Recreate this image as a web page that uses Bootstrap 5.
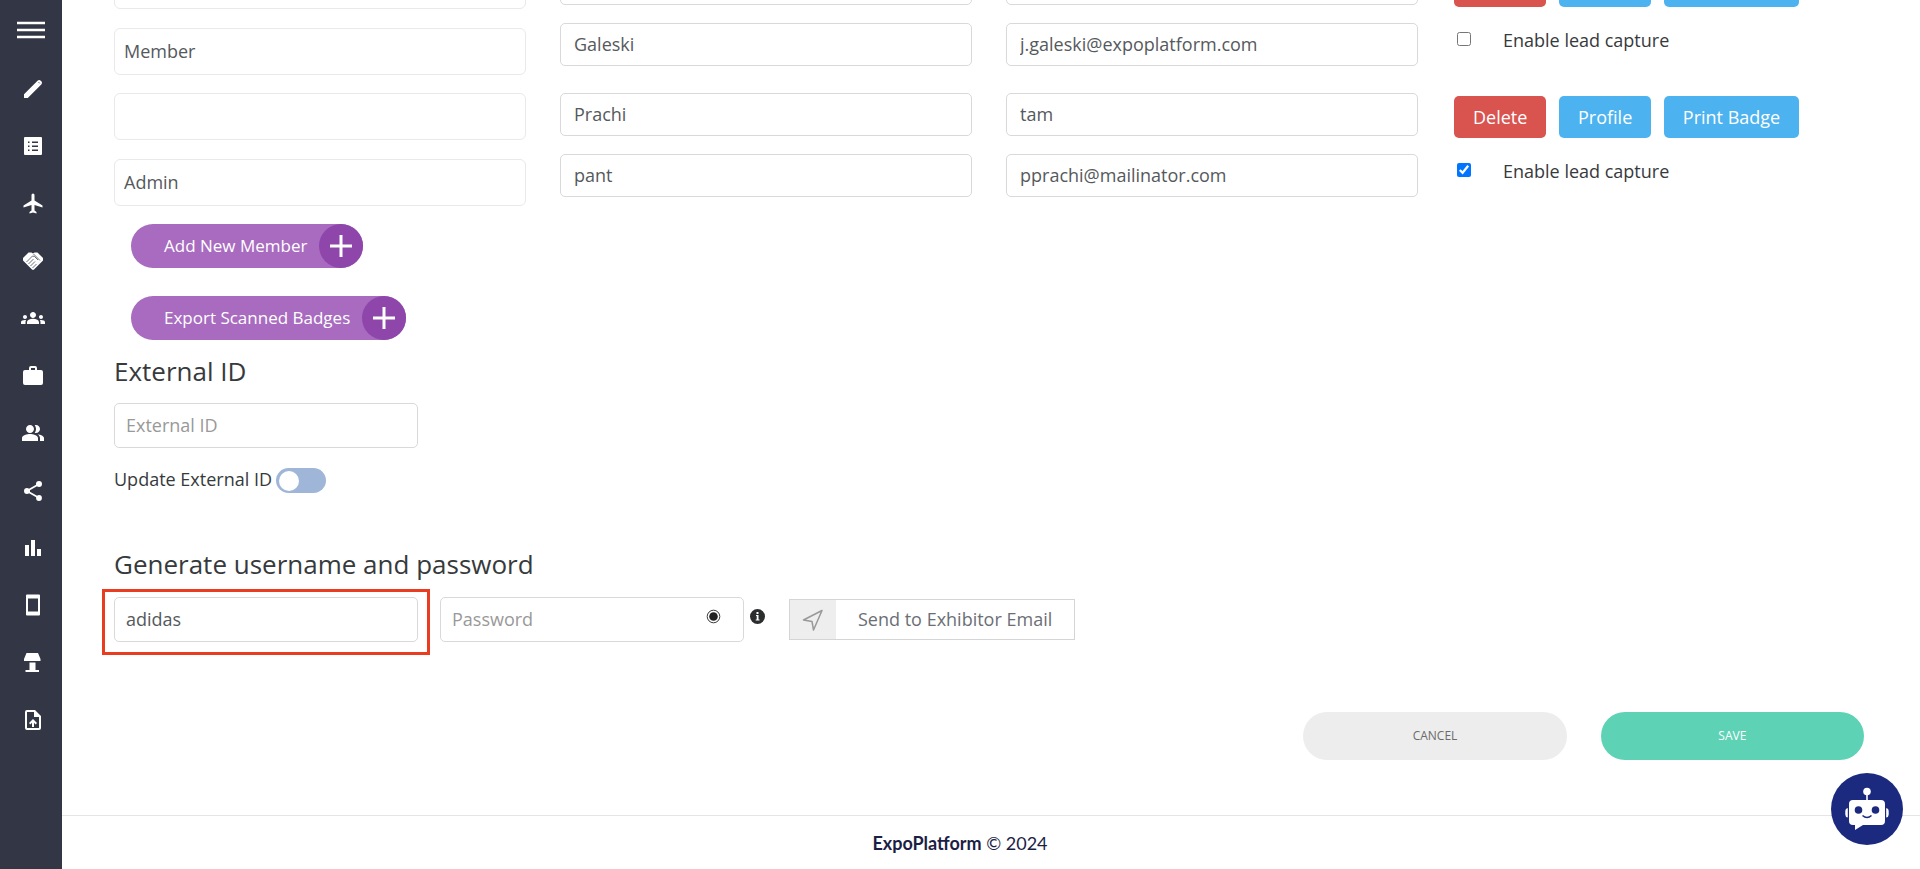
<!DOCTYPE html>
<html lang="en">
<head>
<meta charset="utf-8">
<meta name="viewport" content="width=device-width, initial-scale=1">
<title>ExpoPlatform</title>
<link href="https://cdn.jsdelivr.net/npm/bootstrap@5.3.0/dist/css/bootstrap.min.css" rel="stylesheet">
<style>
body{font-family:"Open Sans",sans-serif;font-size:18px;line-height:24px;color:#373a3c;background:#fff;overflow-x:hidden}
.page{min-height:100vh}
.side{width:62px;background:#333645;color:#fff;z-index:2}
.side .burger{height:60px;color:#fff}
.side .burger svg{width:28px;height:18px}
.icon-list{display:grid;grid-template-rows:repeat(12,1fr);height:689px}
.icon-list a{display:flex;align-items:center;justify-content:center;color:#fff;padding-left:4px}
.icon-list svg{width:24px;height:24px;fill:currentColor}
.content-area{padding:0 56px 0 52px;margin-top:-38px}
.row-wide{--bs-gutter-x:34px}
.member{height:131px}
.form-control,.form-select{font-size:18px;line-height:24px;color:#55595c;border-radius:5px}
.form-control{border-color:#d9d9d9;height:43px;padding:5px 13px 7px}
.form-select{border-color:#e9e9e9;height:47px;padding:7px 9px 9px;background-image:none;border-radius:6px}
.form-control::placeholder{color:#999;opacity:1}
.field{width:304px;height:45px;padding:5px 11px 7px}
.stack-select{display:grid;gap:19px}
.stack-input{display:grid;gap:18px}
.actions{padding-left:19px}
.buttons{gap:13px;padding-top:3px}
.act{font-size:18px;line-height:24px;padding:8px 19px;height:42px;border:0;border-radius:5px;color:#fff}
.act-red{background:#d9534f}
.act-blue{background:#4db3f0}
.act-short{width:92px}
.act-long{width:135px}
.lead-check{gap:32px;margin-top:21px;padding-left:3px}
.lead-check input{width:14px;height:14px;margin:0 0 3px}
.pill{height:44px;border:0;border-radius:22px;background:#a86bc0;color:#fff;font-size:17px;font-weight:500;padding:0 0 0 33px;gap:12px;margin-left:17px}
.pill-plus{width:44px;height:44px;border-radius:50%;background:#8e46aa}
.export{margin-top:28px}
.title{font-size:26px;line-height:36px;font-weight:400;margin:0}
.ext-title{margin-top:13px;margin-bottom:14px}
.update{margin-top:19px;margin-bottom:53px}
.update label{padding-bottom:2px}
.switch{appearance:none;width:50px;height:25px;border-radius:13px;background:#9fb6d8;margin:0;cursor:pointer}
.switch::before{content:"";display:block;width:20px;height:20px;border-radius:50%;background:#fff;margin:3px}
.switch:checked::before{margin-left:27px}
.creds{margin-top:7px}
.marked{border:3px solid #ea3c20;padding:5px 9px 10px 9px;margin:0 10px 0 -12px}
.pass{margin-top:8px}
.eye{right:23px;top:12px;width:15px;height:15px}
.info{margin:20px 24px 0 6px}
.send{border:1px solid #d5d5d5;background:#fff;height:41px;color:#6b6f75;padding:0;margin-top:10px}
.send-icon{width:46px;background:#eee}
.send-text{padding:7px 22px}
.final{margin-top:57px}
.round-btn{height:48px;border:0;border-radius:24px;font-size:12px;line-height:16px}
.cancel{background:#ededed;color:#6b6b6b}
.save{background:#5ed2b5;color:#fff}
.foot{height:54px;border-top:1px solid #e5e5e5;font-family:Lato,sans-serif;font-size:18px;color:#1c1e45;padding-right:62px}
.bot{right:17px;bottom:24px;width:72px;height:72px;background:#1b2a7e;border:0;z-index:5}
</style>
</head>
<body>
<div class="page d-flex">
<nav class="side flex-shrink-0" aria-label="Main">
  <button class="burger btn p-0 border-0 rounded-0 w-100 d-flex align-items-center justify-content-center" aria-label="Menu"><svg viewBox="0 0 28 18" stroke="#fff" stroke-width="2.600"><path d="M0 2h28M0 9h28M0 16h28"/></svg></button>
  <div class="icon-list">
    <a href="#" aria-label="Edit"><svg viewBox="0 0 24 24"><path d="M20.300 7.450c.9-.9.9-2.300 0-3.200l-.550-.550c-.9-.9-2.300-.9-3.200 0L3 17.250V21h3.750L20.300 7.450z"/><path d="M17.700 5.300l1 1" stroke="#333645" stroke-width="1"/></svg></a>
    <a href="#" aria-label="Lists"><svg viewBox="0 0 24 24"><path fill-rule="evenodd" d="M4 3h16a1 1 0 0 1 1 1v16a1 1 0 0 1-1 1H4a1 1 0 0 1-1-1V4a1 1 0 0 1 1-1zM7 7.500V9h1.500V7.500zM11 7.500V9h6V7.500zM7 11.500V13h1.500v-1.500zM11 11.500V13h6v-1.500zM7 15.500V17h1.500v-1.500zM11 15.500V17h6v-1.500z"/></svg></a>
    <a href="#" aria-label="Travel"><svg viewBox="0 0 24 24"><path d="M21 16v-2l-8-5V3.500a1.500 1.500 0 0 0-3 0V9l-8 5v2l8-2.500V19l-2 1.500V22l3.500-1 3.500 1v-1.500L13 19v-5.500l8 2.500z" transform="translate(.5 -.5)"/></svg></a>
    <a href="#" aria-label="Meetings"><svg viewBox="0 0 24 24"><path d="M7.500 3.500h3L12 4.500l1.500-1h3L22 9v2.500L13 20.500q-1 .9-2 0L2 11.500V9z"/><path d="M5.500 13l6-6 2 .5 3.500 3.500M7.500 15l5-5M9.500 17l4.500-4.500M11.500 19l4-4M12.500 5l6.500 6.500" fill="none" stroke="#333645" stroke-width=".7"/></svg></a>
    <a href="#" aria-label="Groups"><svg viewBox="0 0 24 24"><path d="M12 12.750c1.630 0 3.070.390 4.240.900 1.080.480 1.760 1.560 1.760 2.730V18H6v-1.610c0-1.180.680-2.260 1.760-2.730 1.170-.520 2.610-.910 4.240-.910zM4 13c1.100 0 2-.9 2-2s-.9-2-2-2-2 .9-2 2 .9 2 2 2zm1.130 1.100c-.370-.060-.740-.100-1.130-.100-.990 0-1.930.210-2.780.580C.480 14.900 0 15.620 0 16.430V18h4.500v-1.610c0-.830.230-1.610.630-2.290zM20 13c1.100 0 2-.9 2-2s-.9-2-2-2-2 .9-2 2 .9 2 2 2zm4 3.430c0-.810-.480-1.530-1.220-1.850-.850-.370-1.790-.580-2.780-.580-.390 0-.760.040-1.130.100.400.680.630 1.460.630 2.290V18H24v-1.570zM12 6c1.660 0 3 1.340 3 3s-1.340 3-3 3-3-1.340-3-3 1.340-3 3-3z"/></svg></a>
    <a href="#" aria-label="Business"><svg viewBox="0 0 24 24"><path d="M10 2h4a2 2 0 0 1 2 2v2h4a2 2 0 0 1 2 2v11a2 2 0 0 1-2 2H4a2 2 0 0 1-2-2V8a2 2 0 0 1 2-2h4V4a2 2 0 0 1 2-2m4 4V4h-4v2h4z"/></svg></a>
    <a href="#" aria-label="People"><svg viewBox="0 0 24 24"><path d="M16.670 13.130C18.040 14.060 19 15.320 19 17v3h4v-3c0-2.180-3.570-3.470-6.330-3.870zM15 12c2.210 0 4-1.790 4-4s-1.790-4-4-4c-.470 0-.910.100-1.330.240C14.500 5.270 15 6.580 15 8s-.5 2.730-1.330 3.760c.420.140.860.240 1.330.240zM9 12c2.210 0 4-1.790 4-4s-1.790-4-4-4-4 1.790-4 4 1.790 4 4 4zm0 1c-2.670 0-8 1.340-8 4v3h16v-3c0-2.660-5.330-4-8-4z"/></svg></a>
    <a href="#" aria-label="Share"><svg viewBox="0 0 24 24"><path d="M18 16.080c-.760 0-1.440.300-1.960.770L8.910 12.700c.050-.230.090-.460.090-.700s-.040-.470-.090-.700l7.050-4.110c.540.500 1.250.810 2.040.810a3 3 0 1 0-3-3c0 .240.040.470.090.700L8.040 9.810C7.500 9.310 6.790 9 6 9a3 3 0 1 0 0 6c.790 0 1.500-.310 2.040-.810l7.120 4.160c-.050.210-.080.430-.080.650a2.920 2.920 0 1 0 2.920-2.920z"/></svg></a>
    <a href="#" aria-label="Statistics"><svg viewBox="0 0 24 24"><path d="M4 9h4v11H4zM10 4h4v16h-4zM16 13h4v7h-4z"/></svg></a>
    <a href="#" aria-label="Mobile app"><svg viewBox="0 0 24 24"><path fill-rule="evenodd" d="M6 1.500h12a1 1 0 0 1 1 1v19a1 1 0 0 1-1 1H6a1 1 0 0 1-1-1v-19a1 1 0 0 1 1-1zM7 5.500v13h10v-13z"/></svg></a>
    <a href="#" aria-label="Stands"><svg viewBox="0 0 24 24"><path d="M5.500 2h11.500L19.500 8v2H3V8zM8.500 11.500h6V19H18v2H4.500v-2h4z"/></svg></a>
    <a href="#" aria-label="Upload"><svg viewBox="0 0 24 24"><path d="M14 2H6a2 2 0 0 0-2 2v16a2 2 0 0 0 2 2h12a2 2 0 0 0 2-2V8l-6-6m4 18H6V4h7v5h5v11M8 15l1.400 1.400L11 14.800V19h2v-4.200l1.600 1.600L16 15l-4-4-4 4z"/></svg></a>
  </div>
</nav>
<div class="flex-grow-1 d-flex flex-column">
<main class="content-area flex-grow-1">
  <div class="row row-wide member">
    <div class="col-3 stack-select align-content-start">
      <select class="form-select" aria-label="Title"><option></option></select>
      <select class="form-select" aria-label="Role"><option>Member</option></select>
    </div>
    <div class="col-3 stack-input align-content-start">
      <input class="form-control" aria-label="First name">
      <input class="form-control" aria-label="Last name" value="Galeski">
    </div>
    <div class="col-3 stack-input align-content-start">
      <input class="form-control" aria-label="Position">
      <input class="form-control" aria-label="Email" value="j.galeski@expoplatform.com">
    </div>
    <div class="col-3 actions">
      <div class="d-flex buttons"><button class="act act-red act-short" aria-label="Delete"></button><button class="act act-blue act-short" aria-label="Profile"></button><button class="act act-blue act-long" aria-label="Print Badge"></button></div>
      <div class="lead-check d-flex align-items-center"><input type="checkbox" id="lead1"><label for="lead1">Enable lead capture</label></div>
    </div>
  </div>
  <div class="row row-wide member">
    <div class="col-3 stack-select align-content-start">
      <select class="form-select" aria-label="Title"><option></option></select>
      <select class="form-select" aria-label="Role"><option>Admin</option></select>
    </div>
    <div class="col-3 stack-input align-content-start">
      <input class="form-control" aria-label="First name" value="Prachi">
      <input class="form-control" aria-label="Last name" value="pant">
    </div>
    <div class="col-3 stack-input align-content-start">
      <input class="form-control" aria-label="Position" value="tam">
      <input class="form-control" aria-label="Email" value="pprachi@mailinator.com">
    </div>
    <div class="col-3 actions">
      <div class="d-flex buttons"><button class="act act-red act-short">Delete</button><button class="act act-blue act-short">Profile</button><button class="act act-blue act-long text-nowrap px-0">Print Badge</button></div>
      <div class="lead-check d-flex align-items-center"><input type="checkbox" id="lead2" checked><label for="lead2">Enable lead capture</label></div>
    </div>
  </div>
  <button class="pill d-flex align-items-center">Add New Member<span class="pill-plus d-flex align-items-center justify-content-center"><svg width="22" height="22" viewBox="0 0 22 22" stroke="#fff" stroke-width="3"><path d="M11 0v22M0 11h22"/></svg></span></button>
  <button class="pill d-flex align-items-center export">Export Scanned Badges<span class="pill-plus d-flex align-items-center justify-content-center"><svg width="22" height="22" viewBox="0 0 22 22" stroke="#fff" stroke-width="3"><path d="M11 0v22M0 11h22"/></svg></span></button>

  <h2 class="title ext-title"><label for="ext">External ID</label></h2>
  <input class="form-control field" id="ext" placeholder="External ID">
  <div class="d-flex align-items-center gap-1 update"><label for="upd">Update External ID</label><input type="checkbox" role="switch" class="switch" id="upd"></div>

  <h2 class="title">Generate username and password</h2>
  <div class="d-flex align-items-start creds">
    <div class="marked"><input class="form-control field" aria-label="Username" value="adidas"></div>
    <div class="position-relative pass">
      <input class="form-control field" type="password" aria-label="Password" placeholder="Password">
      <button class="eye btn p-0 border-0 position-absolute d-flex" aria-label="Show password"><svg width="15" height="15" viewBox="0 0 15 15"><circle cx="7.500" cy="7.500" r="6.300" fill="none" stroke="#373a3c"/><circle cx="7.500" cy="7.500" r="4.300" fill="#222"/></svg></button>
    </div>
    <svg class="info" width="15" height="15" viewBox="0 0 15 15" role="img" aria-label="Info"><circle cx="7.500" cy="7.500" r="7.500" fill="#2b2d2f"/><path d="M6 6h2.500v4.500h1v1H5.700v-1h1V7H6zM6.500 3h2v2h-2z" fill="#fff"/></svg>
    <button class="send d-flex align-items-stretch"><span class="send-icon d-flex align-items-center justify-content-center"><svg width="22" height="22" viewBox="0 0 22 22" fill="none" stroke="#999" stroke-width="1.500" stroke-linejoin="round"><path d="M20 1.500L1.500 11l8.500 1.500 1.500 8.500z"/></svg></span><span class="send-text">Send to Exhibitor Email</span></button>
  </div>
  <div class="row row-wide justify-content-end final">
    <div class="col-2"><button class="round-btn w-100 cancel">CANCEL</button></div>
    <div class="col-2"><button class="round-btn w-100 save">SAVE</button></div>
  </div>
</main>
<footer class="foot d-flex align-items-center justify-content-center"><span><strong>ExpoPlatform</strong> © 2024</span></footer>
</div>
</div>
<button class="bot position-fixed rounded-circle p-0 d-flex align-items-center justify-content-center" aria-label="Chat assistant"><svg width="44" height="44" viewBox="0 0 44 44" fill="#fff"><circle cx="22" cy="4.500" r="3.800"/><path d="M21.200 7h1.600v6h-1.600zM8 13h28a4 4 0 0 1 4 4v17a4 4 0 0 1-4 4H18l-8 5v-5H8a4 4 0 0 1-4-4V17a4 4 0 0 1 4-4zM2.800 21v9.500A3 3 0 0 1 .3 27.500V24a3 3 0 0 1 2.500-3zM41.200 21v9.500a3 3 0 0 0 2.500-3V24a3 3 0 0 0-2.500-3z"/><g fill="#1b2a7e"><circle cx="13.500" cy="23" r="3.800"/><circle cx="30.500" cy="23" r="3.800"/></g><path d="M17.500 28.500q4.500 4 9 0" fill="none" stroke="#1b2a7e" stroke-width="1.500"/></svg></button>
<script src="https://cdn.jsdelivr.net/npm/bootstrap@5.3.0/dist/js/bootstrap.bundle.min.js"></script>
</body>
</html>
